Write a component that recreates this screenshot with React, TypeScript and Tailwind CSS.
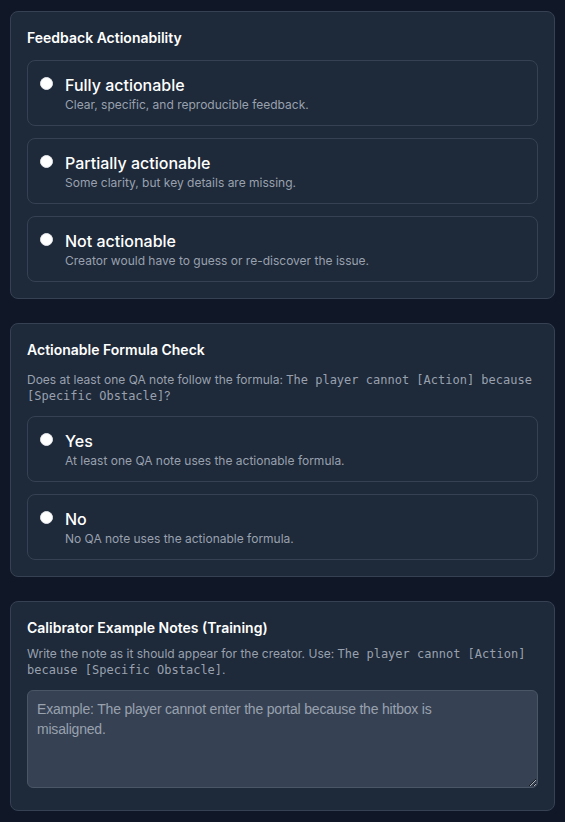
import React, { useState } from 'react';

interface Option {
  value: string;
  label: string;
  description: string;
}

const actionabilityOptions: Option[] = [
  { value: 'fully', label: 'Fully actionable', description: 'Clear, specific, and reproducible feedback.' },
  { value: 'partially', label: 'Partially actionable', description: 'Some clarity, but key details are missing.' },
  { value: 'not', label: 'Not actionable', description: 'Creator would have to guess or re-discover the issue.' },
];

const formulaOptions: Option[] = [
  { value: 'yes', label: 'Yes', description: 'At least one QA note uses the actionable formula.' },
  { value: 'no', label: 'No', description: 'No QA note uses the actionable formula.' },
];

const sans = { fontFamily: 'Inter, "Noto Sans", sans-serif' };

const RadioGroup: React.FC<{ name: string; options: Option[] }> = ({ name, options }) => {
  const [selected, setSelected] = useState<string>('');

  return (
    <div className="flex flex-col gap-3">
      {options.map((opt) => (
        <label
          key={opt.value}
          className="flex items-start gap-3 rounded-lg border border-gray-700 p-3 cursor-pointer"
        >
          <input
            type="radio"
            name={name}
            value={opt.value}
            checked={selected === opt.value}
            onChange={() => setSelected(opt.value)}
            className="mt-1 h-[13px] w-[13px] shrink-0 appearance-none rounded-full border border-gray-200 bg-white checked:border-[4px] checked:border-blue-500"
          />
          <div className="flex flex-col">
            <span className="text-base leading-6 font-medium text-white">{opt.label}</span>
            <span className="text-xs leading-4 text-gray-400">{opt.description}</span>
          </div>
        </label>
      ))}
    </div>
  );
};

const Code: React.FC<{ children: React.ReactNode }> = ({ children }) => (
  <code
    className="text-xs leading-4"
    style={{ fontFamily: '"DejaVu Sans Mono", "Liberation Mono", monospace' }}
  >
    {children}
  </code>
);

export default function App() {
  return (
    <div className="min-h-screen bg-gray-900 px-2.5 pt-[11px] pb-3" style={sans}>
      <div className="flex flex-col gap-6">
        {/* Feedback Actionability */}
        <section className="rounded-lg border border-gray-700 bg-gray-800 p-4">
          <h3 className="mb-3 text-sm font-semibold text-white">Feedback Actionability</h3>
          <RadioGroup name="actionability" options={actionabilityOptions} />
        </section>

        {/* Actionable Formula Check */}
        <section className="rounded-lg border border-gray-700 bg-gray-800 p-4">
          <h3 className="mb-3 text-sm font-semibold text-white">Actionable Formula Check</h3>
          <p className="mb-3 text-xs leading-4 text-gray-400">
            Does at least one QA note follow the formula:{' '}
            <Code>The player cannot [Action] because [Specific Obstacle]</Code>?
          </p>
          <RadioGroup name="formula" options={formulaOptions} />
        </section>

        {/* Calibrator Example Notes */}
        <section className="rounded-lg border border-gray-700 bg-gray-800 p-4">
          <h3 className="mb-2 text-sm font-semibold text-white">Calibrator Example Notes (Training)</h3>
          <p className="mb-3 text-xs leading-4 text-gray-400">
            Write the note as it should appear for the creator. Use:{' '}
            <Code>The player cannot [Action] because [Specific Obstacle]</Code>.
          </p>
          <textarea
            rows={4}
            placeholder={'Example: The player cannot enter the portal because the hitbox is\nmisaligned.'}
            className="w-full rounded-md border border-gray-600 bg-gray-700 px-[9px] py-2 text-sm leading-5 tracking-[-0.2px] text-white placeholder-gray-400 outline-none"
            style={{ fontFamily: '"Liberation Sans", Arial, sans-serif' }}
          />
        </section>
      </div>
    </div>
  );
}
